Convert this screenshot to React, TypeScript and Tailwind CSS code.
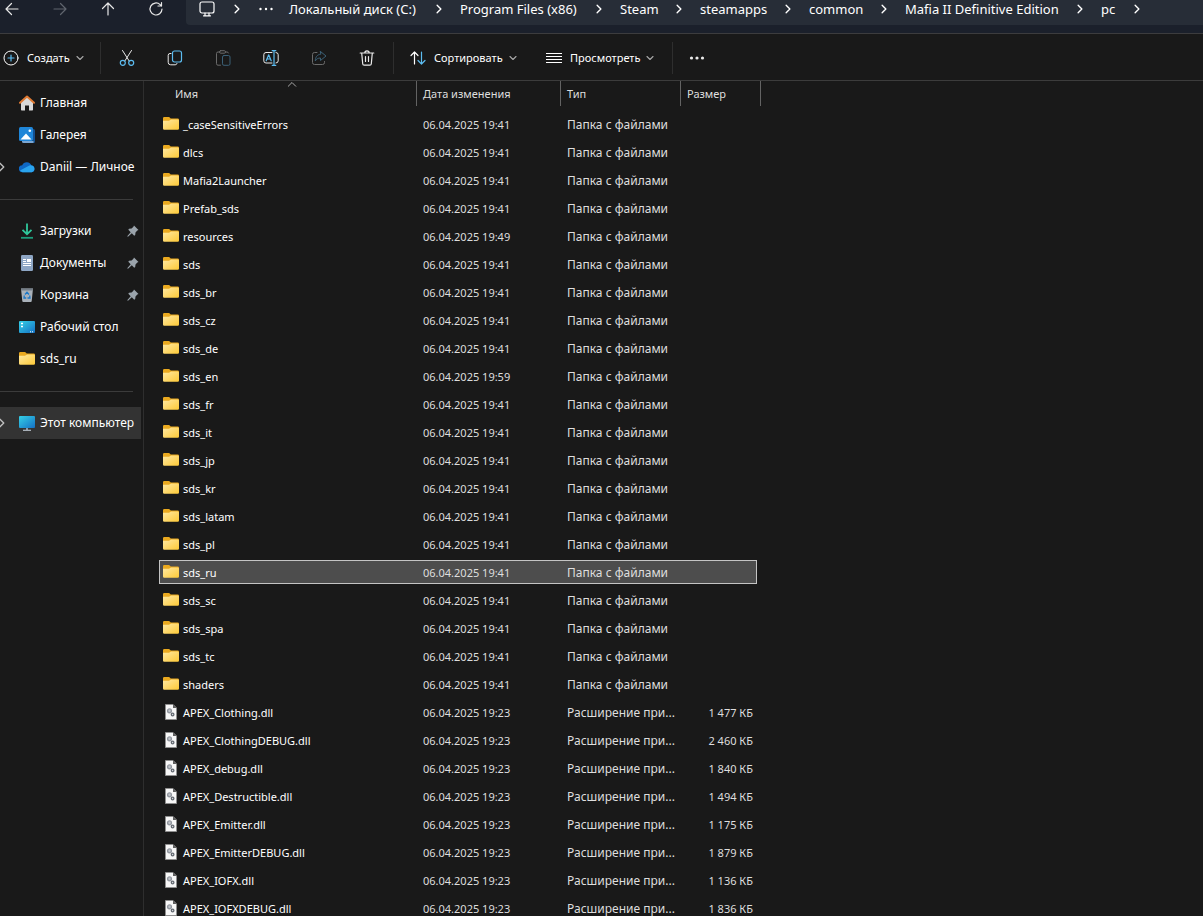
import type { ReactNode } from "react";

interface FileRow {
  name: string;
  date: string;
  size?: string;
}

const CRUMBS = [
  { label: "Локальный диск (C:)", width: "w-[129px]" },
  { label: "Program Files (x86)", width: "w-[118px]" },
  { label: "Steam", width: "w-[38px]" },
  { label: "steamapps", width: "w-[67px]" },
  { label: "common", width: "w-[54px]" },
  { label: "Mafia II Definitive Edition", width: "w-[154px]" },
  { label: "pc", width: "w-[15px]" },
];

const FOLDERS = [
  "_caseSensitiveErrors", "dlcs", "Mafia2Launcher", "Prefab_sds", "resources", "sds", "sds_br",
  "sds_cz", "sds_de", "sds_en", "sds_fr", "sds_it", "sds_jp", "sds_kr", "sds_latam", "sds_pl",
  "sds_ru", "sds_sc", "sds_spa", "sds_tc", "shaders",
];

const FOLDER_TIMES: Record<string, string> = { resources: "19:49", sds_en: "19:59" };

const LIBRARIES: FileRow[] = [
  { name: "APEX_Clothing.dll", date: "06.04.2025 19:23", size: "1 477 КБ" },
  { name: "APEX_ClothingDEBUG.dll", date: "06.04.2025 19:23", size: "2 460 КБ" },
  { name: "APEX_debug.dll", date: "06.04.2025 19:23", size: "1 840 КБ" },
  { name: "APEX_Destructible.dll", date: "06.04.2025 19:23", size: "1 494 КБ" },
  { name: "APEX_Emitter.dll", date: "06.04.2025 19:23", size: "1 175 КБ" },
  { name: "APEX_EmitterDEBUG.dll", date: "06.04.2025 19:23", size: "1 879 КБ" },
  { name: "APEX_IOFX.dll", date: "06.04.2025 19:23", size: "1 136 КБ" },
  { name: "APEX_IOFXDEBUG.dll", date: "06.04.2025 19:23", size: "1 836 КБ" },
];

const ROWS: FileRow[] = [
  ...FOLDERS.map(name => ({ name, date: `06.04.2025 ${FOLDER_TIMES[name] ?? "19:41"}` })),
  ...LIBRARIES,
];

const SELECTED = "sds_ru";

function Stroke({ children, size = 16, className = "" }: { children: ReactNode; size?: number; className?: string }) {
  return (
    <svg width={size} height={size} viewBox="0 0 16 16" fill="none" stroke="currentColor" strokeLinecap="round" strokeLinejoin="round" className={`shrink-0 ${className}`}>
      {children}
    </svg>
  );
}

const BLUE = "#5cbcf0";

const BackIcon = () => <Stroke><path d="M14 8H2M7.5 2.5 2 8l5.5 5.5" strokeWidth="1.2" /></Stroke>;
const ForwardIcon = () => <Stroke><path d="M2 8h12M8.5 2.5 14 8l-5.5 5.5" strokeWidth="1.2" /></Stroke>;
const UpIcon = () => <Stroke><path d="M8 14V2M2.5 7.5 8 2l5.5 5.5" strokeWidth="1.2" /></Stroke>;
const RefreshIcon = () => <Stroke><path d="M14 8a6 6 0 1 1-1.9-4.4L13.5 5M13.5 1.5V5H10" strokeWidth="1.2" /></Stroke>;
const MonitorIcon = () => (
  <Stroke><rect x="1" y="1" width="14" height="11" rx="2" strokeWidth="1.2" /><path d="M6 12v2.5M10 12v2.5M4.5 14.8h7" strokeWidth="1.2" /></Stroke>
);
const ChevronRight = () => <Stroke size={12}><path d="m5.5 3 5 5-5 5" strokeWidth="1.8" /></Stroke>;
const ChevronDown = () => <Stroke size={8} className="text-[#a8a8a8]"><path d="m2 5 6 6 6-6" strokeWidth="2.2" /></Stroke>;

const DotsIcon = ({ r }: { r: number }) => (
  <svg width="16" height="16" viewBox="0 0 16 16" fill="currentColor">
    <circle cx="2.5" cy="8" r={r} /><circle cx="8" cy="8" r={r} /><circle cx="13.5" cy="8" r={r} />
  </svg>
);

const NewIcon = () => <Stroke><circle cx="8" cy="8" r="7" /><path d="M8 5v6M5 8h6" stroke={BLUE} strokeWidth="1.2" /></Stroke>;
const CutIcon = () => (
  <Stroke>
    <path d="m3.5 0.5 6.7 10.5M12.5 0.5 5.8 11" />
    <circle cx="3.8" cy="12.8" r="2.5" stroke={BLUE} strokeWidth="1.2" /><circle cx="12.2" cy="12.8" r="2.5" stroke={BLUE} strokeWidth="1.2" />
  </Stroke>
);
const CopyIcon = () => (
  <Stroke>
    <path d="M4 3.5H3A1.8 1.8 0 0 0 1.2 5.3v7A2.500 2.500 0 0 0 3.7 14.8h4.5A1.8 1.8 0 0 0 10 13.5" />
    <rect x="5.5" y="1" width="9" height="11" rx="2" stroke={BLUE} strokeWidth="1.2" />
  </Stroke>
);
const PasteIcon = () => (
  <Stroke>
    <path d="M4.5 2H3a1.5 1.5 0 0 0-1.5 1.5v10.2A1.5 1.5 0 0 0 3 15.2h2.5M10.5 2H12a1.5 1.5 0 0 1 1.5 1" stroke="#6b6b6b" />
    <rect x="4.5" y="0.7" width="6" height="2.5" rx="1.2" stroke="#6b6b6b" />
    <rect x="7.5" y="5.5" width="7.5" height="9.8" rx="1.5" stroke="#3b6076" />
  </Stroke>
);
const RenameIcon = () => (
  <Stroke>
    <path d="M9 2.5H3A2.2 2.2 0 0 0 .8 4.7v6.1A2.2 2.2 0 0 0 3 13h6M13 2.5a2.2 2.2 0 0 1 2.2 2.2v6.1A2.2 2.2 0 0 1 13 13" />
    <path d="M11 .7v14.6M9.2.7h3.6M9.2 15.3h3.6M3.2 10.8 5.7 4.8l2.5 6M4 9h3.4" stroke={BLUE} strokeWidth="1.2" />
  </Stroke>
);
const ShareIcon = () => (
  <Stroke>
    <path d="M6 2.5H3.5a2 2 0 0 0-2 2v8a2 2 0 0 0 2 2h8a2 2 0 0 0 2-2V11.5" stroke="#6b6b6b" />
    <path d="M9.5 1.5 15 6l-5.500 4.500V8C7 8 5.200 9 4.300 11c0-3.500 1.700-6.500 5.200-6.800z" stroke="#3b6076" />
  </Stroke>
);
const TrashIcon = () => <Stroke><path d="M1.200 3h13.600M5.800 3a2.200 2.200 0 0 1 4.400 0M2.700 3l1 10.700a1.500 1.500 0 0 0 1.500 1.400h5.600a1.500 1.500 0 0 0 1.500-1.400l1-10.700M6.500 6.500v5M9.500 6.500v5" strokeWidth="1.2" /></Stroke>;
const SortIcon = () => (
  <Stroke><path d="M4.500 14V2M1 5.500 4.500 2 8 5.500" strokeWidth="1.2" /><path d="M11.500 2v12M8 10.500l3.500 3.500 3.500-3.500" stroke={BLUE} strokeWidth="1.2" /></Stroke>
);
const ViewIcon = () => <Stroke><path d="M0 3.500h16M0 6.500h16M0 9.500h16M0 12.500h16" strokeLinecap="butt" /></Stroke>;

function FolderIcon() {
  return (
    <svg width="16" height="16" viewBox="0 1 16 16" className="shrink-0">
      <defs>
        <linearGradient id="folder" x1="0" y1="0" x2="1" y2="1"><stop offset="0" stopColor="#ffe9a3" /><stop offset="1" stopColor="#fdc937" /></linearGradient>
      </defs>
      <path d="M0 3.300A1.300 1.300 0 0 1 1.300 2h4.400c.5 0 .8.200 1.100.5l.9 1h7A1.300 1.300 0 0 1 16 4.800V8H0z" fill="#eaa91f" />
      <path d="M0 5.800h5.800c.5 0 .8-.2 1.100-.5l.8-.6c.3-.2.600-.3 1-.3h6A1.300 1.300 0 0 1 16 5.600v7.800a1.300 1.300 0 0 1-1.300 1.300H1.300A1.300 1.300 0 0 1 0 13.400z" fill="url(#folder)" />
    </svg>
  );
}

function DllIcon() {
  return (
    <svg width="16" height="16" viewBox="0 0 16 16" className="shrink-0">
      <path d="M2.500.5H10l3.500 3.500v11.500h-11z" fill="#f7f7f7" stroke="#8f8f8f" />
      <path d="M10 .5V4h3.500z" fill="#5c5c5c" />
      <circle cx="6.500" cy="6.800" r="1.900" fill="#c3c7cc" stroke="#9398a0" strokeWidth="1.400" />
      <circle cx="9.600" cy="10.500" r="1.300" fill="#d9dbde" stroke="#646a72" strokeWidth="1.300" />
    </svg>
  );
}

const HomeIcon = () => (
  <svg width="16" height="16" viewBox="0 0 16 16" className="shrink-0">
    <path d="M2 6.500 8 1.500l6 5v8.300a.7.7 0 0 1-.7.700H10v-5H6v5H2.700a.7.7 0 0 1-.7-.7z" fill="#d9d9d9" />
    <path d="M1 7.800 8 1.500l7 6.300" fill="none" stroke="#e07a33" strokeWidth="2" strokeLinecap="round" strokeLinejoin="round" />
  </svg>
);
const GalleryIcon = () => (
  <svg width="16" height="16" viewBox="0 0 16 16" className="shrink-0">
    <path d="M14 2h.5A1.500 1.500 0 0 1 16 3.500v11a1.500 1.500 0 0 1-1.500 1.500H14z" fill="#14508f" />
    <path d="M3 14h11.500v2h-10A1.500 1.500 0 0 1 3 14.500z" fill="#7ba6d2" />
    <rect width="14" height="14" rx="1.500" fill="#1f86d8" />
    <path d="m1.500 12.500 5.500-6 5.500 6z" fill="#fff" /><circle cx="10.800" cy="3.800" r="1.300" fill="#fff" />
  </svg>
);
const CloudIcon = () => (
  <svg width="16" height="16" viewBox="0 0 16 16" className="shrink-0">
    <path d="M3.500 13.200a3.500 3.500 0 0 1-.3-7A5 5 0 0 1 12.500 6.500 3.400 3.400 0 0 1 12.700 13.200z" fill="#0f68c4" />
    <path d="M1 11.600 9.500 6.900c1-.6 2-.7 3-.4A3.400 3.400 0 0 1 12.700 13.200H3.500A3.300 3.300 0 0 1 1 11.600z" fill="#2aa4ee" />
  </svg>
);
const DownloadIcon = () => (
  <svg width="16" height="16" viewBox="0 0 16 16" fill="none" strokeWidth="1.800" className="shrink-0">
    <path d="M8 .5v10.500M3.500 6.800 8 11.200l4.500-4.400" stroke="#2fc79b" /><path d="M2 14.800h12" stroke="#1d9d7c" />
  </svg>
);
const DocumentIcon = () => (
  <svg width="16" height="16" viewBox="0 0 16 16" className="shrink-0">
    <rect x="2" width="12" height="16" rx="1.200" fill="#8ea6c4" />
    <path d="M4 4.500h3M4 6.500h3M4 8.500h8M4 10.500h8" stroke="#fff" /><rect x="8" y="4" width="4" height="3" fill="#fff" />
  </svg>
);
const BinIcon = () => (
  <svg width="16" height="16" viewBox="0 0 16 16" className="shrink-0">
    <path d="M2 1.500h12l-1.300 12.700a1 1 0 0 1-1 .8H4.300a1 1 0 0 1-1-.8z" fill="#a9b1b9" />
    <path d="M2 1.500h12l-.2 2H2.200z" fill="#757e87" />
    <path d="m6 7.500 2-2.300 2 2.300M10.700 8.500 11 11H8.500M5.300 8.500 5 11h2.200" fill="none" stroke="#1b78c8" strokeWidth="1.300" />
  </svg>
);
const DesktopIcon = () => (
  <svg width="16" height="16" viewBox="0 0 16 16" className="shrink-0">
    <defs><linearGradient id="screen" x1="0" y1="0" x2="1" y2="1"><stop offset="0" stopColor="#35d0e6" /><stop offset="1" stopColor="#1571c4" /></linearGradient></defs>
    <rect y="2" width="16" height="12" rx="1" fill="url(#screen)" />
    <path d="M2 4.500h2M2 7.500h2" stroke="#fff" strokeWidth="1.500" /><path d="M11 12.800h1M13 12.800h1" stroke="#fff" />
  </svg>
);
const ComputerIcon = () => (
  <svg width="16" height="16" viewBox="0 0 16 16" className="shrink-0">
    <rect y="1" width="16" height="12" rx="1" fill="url(#screen)" />
    <path d="M8 13v2" stroke="#8a98a5" strokeWidth="2" /><path d="M4 15.300h8" stroke="#b5bec7" strokeWidth="1.200" />
  </svg>
);
const PinIcon = () => (
  <svg width="12" height="12" viewBox="0 0 12 12" className="shrink-0">
    <path d="M7 .5 11.500 5l-1.200.6-1.800 1.800-.3 2.600-1 .7L4.800 8.300 1 11.800l-.8-.6L3.700 7.200 1.300 4.800l.7-1 2.600-.3L6.400 1.700z" fill="#9aa3ab" />
  </svg>
);

function NavItem({ icon, label, pinned, expandable, active }: { icon: ReactNode; label: string; pinned?: boolean; expandable?: boolean; active?: boolean }) {
  return (
    <li className={`h-8 mr-[2px] ${active ? "bg-[#333333]" : ""}`}>
      <a href="#" className="flex h-full items-center whitespace-nowrap">
        <span className="w-[19px] shrink-0 text-[#c0c0c0]">
          {expandable && <Stroke size={12} className="-ml-[6px]"><path d="m8 3 5 5-5 5" strokeWidth="1.800" /></Stroke>}
        </span>
        {icon}
        <span className="ml-[5px] flex-1">{label}</span>
        {pinned && <span className="mr-[2px]"><PinIcon /></span>}
      </a>
    </li>
  );
}

const NavDivider = () => <li className="flex h-8 items-center"><hr className="mr-[10px] w-full border-[#3b3b3b]" /></li>;
const ToolDivider = () => <div className="h-8 w-px shrink-0 bg-[#2e2e2e]" />;

export default function App() {
  return (
    <div className="flex h-screen flex-col overflow-hidden bg-[#191919] font-['Noto_Sans','Open_Sans',sans-serif] text-xs text-white">
      {/* Navigation and address bar */}
      <header className="flex shrink-0 border-b border-[#3c3c3e] bg-[#1b202b] pb-2">
        <div className="-ml-3 flex w-[198px] shrink-0 items-center pb-[7px] text-[#e8e8e8]">
          <button aria-label="Назад" className="flex w-12 justify-center"><BackIcon /></button>
          <button aria-label="Вперёд" disabled className="flex w-12 justify-center text-[#60656e]"><ForwardIcon /></button>
          <button aria-label="Вверх" className="flex w-12 justify-center"><UpIcon /></button>
          <button aria-label="Обновить" className="flex w-12 justify-center"><RefreshIcon /></button>
        </div>
        <nav className="flex h-[25px] flex-1 items-center overflow-hidden rounded-bl bg-[#272d37] pb-[7px] pl-[13px] text-[13px] leading-[18px]">
          <MonitorIcon />
          <span className="ml-4"><ChevronRight /></span>
          <span className="mx-[15px]"><DotsIcon r={1.2} /></span>
          {CRUMBS.map(c => (
            <div key={c.label} className="flex shrink-0 items-center">
              <a href="#" className={`whitespace-nowrap ${c.width}`}>{c.label}</a>
              <span className="mx-[15px]"><ChevronRight /></span>
            </div>
          ))}
        </nav>
      </header>

      {/* Command bar */}
      <div className="flex h-[47px] shrink-0 items-center border-b border-[#3c3c3c] pt-[2px] text-[11px] text-[#eaeaea]">
        <button className="flex w-[100px] items-center pl-[3px] text-white">
          <NewIcon /><span className="ml-2 mr-[6px]">Создать</span><ChevronDown />
        </button>
        <ToolDivider />
        <div className="mx-[2px] flex">
          <button aria-label="Вырезать" className="flex w-12 justify-center"><CutIcon /></button>
          <button aria-label="Копировать" className="flex w-12 justify-center"><CopyIcon /></button>
          <button aria-label="Вставить" disabled className="flex w-12 justify-center"><PasteIcon /></button>
          <button aria-label="Переименовать" className="flex w-12 justify-center"><RenameIcon /></button>
          <button aria-label="Поделиться" disabled className="flex w-12 justify-center"><ShareIcon /></button>
          <button aria-label="Удалить" className="flex w-12 justify-center"><TrashIcon /></button>
        </div>
        <ToolDivider />
        <button className="flex w-[136px] items-center pl-4 text-white">
          <SortIcon /><span className="ml-2 mr-[6px]">Сортировать</span><ChevronDown />
        </button>
        <button className="flex w-[142px] items-center pl-4 text-white">
          <ViewIcon /><span className="ml-2 mr-[6px]">Просмотреть</span><ChevronDown />
        </button>
        <ToolDivider />
        <button aria-label="Ещё" className="px-4"><DotsIcon r={1.6} /></button>
      </div>

      <div className="flex min-h-0 flex-1">
        {/* Sidebar */}
        <aside className="w-36 shrink-0 border-r border-[#2e2e2e] pt-[6px]">
          <ul>
            <NavItem icon={<HomeIcon />} label="Главная" />
            <NavItem icon={<GalleryIcon />} label="Галерея" />
            <NavItem icon={<CloudIcon />} label="Daniil — Личное" expandable />
            <NavDivider />
            <NavItem icon={<DownloadIcon />} label="Загрузки" pinned />
            <NavItem icon={<DocumentIcon />} label="Документы" pinned />
            <NavItem icon={<BinIcon />} label="Корзина" pinned />
            <NavItem icon={<DesktopIcon />} label="Рабочий стол" />
            <NavItem icon={<FolderIcon />} label="sds_ru" />
            <NavDivider />
            <NavItem icon={<ComputerIcon />} label="Этот компьютер" expandable active />
          </ul>
        </aside>

        {/* File list */}
        <main className="min-w-0 flex-1 overflow-hidden pl-[15px]">
          <table className="-mt-1 w-[598px] table-fixed border-separate border-spacing-x-0 border-spacing-y-1 text-left text-[11px]">
            <colgroup>
              <col className="w-[258px]" />
              <col className="w-36" />
              <col className="w-[120px]" />
              <col />
            </colgroup>
            <thead className="text-[#dedede]">
              <tr className="h-[27px] align-top">
                <th className="p-0 font-normal">
                  <div className="relative h-[25px] border-r border-[#636363] pl-4 leading-[25px]">
                    Имя
                    <Stroke size={10} className="absolute left-32 -top-px text-[#a8a8a8]"><path d="m2 10 6-6 6 6" strokeWidth="1.600" /></Stroke>
                  </div>
                </th>
                <th className="p-0 font-normal"><div className="h-[25px] border-r border-[#636363] pl-[6px] leading-[25px]">Дата изменения</div></th>
                <th className="p-0 font-normal"><div className="h-[25px] border-r border-[#636363] pl-[6px] leading-[25px]">Тип</div></th>
                <th className="p-0 font-normal"><div className="h-[25px] w-20 border-r border-[#636363] pl-[6px] leading-[25px]">Размер</div></th>
              </tr>
            </thead>
            <tbody className="leading-4 text-[#dedede]">
              {ROWS.map(row => (
                <tr key={row.name} className={`h-6 whitespace-nowrap ${row.name === SELECTED ? "bg-[#4d4d4d] outline outline-1 -outline-offset-1 outline-[#c4c4c4]" : ""}`}>
                  <td className="p-0">
                    <div className="flex items-center gap-1 pl-1 text-white">
                      {row.size ? <DllIcon /> : <FolderIcon />}
                      <span className="pt-[2px]">{row.name}</span>
                    </div>
                  </td>
                  <td className="p-0 pt-[2px] pl-[6px]">{row.date}</td>
                  <td className="p-0 pt-[2px] pl-[6px] text-xs">{row.size ? "Расширение при..." : "Папка с файлами"}</td>
                  <td className="p-0 pt-[2px] pr-1 text-right">{row.size}</td>
                </tr>
              ))}
            </tbody>
          </table>
        </main>
      </div>
    </div>
  );
}
